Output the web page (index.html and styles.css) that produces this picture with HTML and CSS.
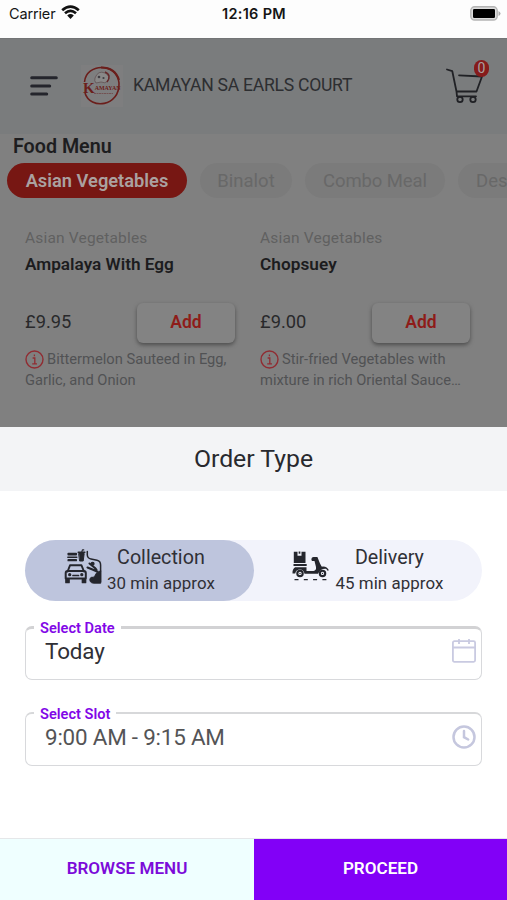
FILE: index.html
```
<!DOCTYPE html>
<html lang="en">
<head>
<meta charset="utf-8">
<title>Order Type</title>
<link rel="stylesheet" href="styles.css">
</head>
<body>
<div class="app">
  <div class="status">
    <div class="carrier"><span>Carrier</span>
      <svg width="19" height="15" viewBox="0 0 19 15"><path d="M1.2 5.3Q9.5-2 17.8 5.3M4 8.3Q9.5 3.5 15 8.3" fill="none" stroke="#111" stroke-width="2.7"/><path d="M6.2 10.4Q9.5 7.8 12.8 10.4L9.5 14Z" fill="#111"/></svg>
    </div>
    <div class="time">12:16 PM</div>
    <svg class="battery" width="31" height="15" viewBox="0 0 31 15"><rect x=".8" y=".8" width="26.4" height="13.2" rx="3.8" fill="#ddd" stroke="#b4b4b4" stroke-width="1.4"/><rect x="3" y="3" width="22" height="9" rx="1.2" fill="#000"/><path d="M28.5 5v5q2-1 2-2.5T28.5 5" fill="#aaa"/></svg>
  </div>

  <header class="header">
    <svg class="burger" width="28" height="20" viewBox="0 0 28 20" fill="none" stroke="#24252c" stroke-width="3" stroke-linecap="round"><path d="M1.7 1.8H26.3M1.7 9.9H19.7M1.7 18H16.7"/></svg>
    <svg class="logo" width="42" height="42" viewBox="0 0 42 42">
      <rect width="42" height="42" fill="#7e7e7f"/>
      <path d="M3.5 17C5-2 36-3 38 18C39 42 9 45 4 28" fill="none" stroke="#6b1e1b" stroke-width="1.6"/>
      <path d="M20 2.6Q34 2.5 38 15" fill="none" stroke="#6b1e1b" stroke-width="2"/>
      <path d="M14 13Q17 5 24 8Q30 11 27 16Q24 19 20 17L15 18Q13 16 14 13Z" fill="#898888" stroke="#625354" stroke-width=".8"/>
      <path d="M24 7Q31 10 26 17" fill="none" stroke="#66282a" stroke-width="1.5"/><circle cx="18" cy="12" r="1.3" fill="#413e43"/><circle cx="22.5" cy="13" r="1.1" fill="#413e43"/>
      <text x="2" y="28" class="logo-text"><tspan class="logo-k">K</tspan><tspan dy="-3" textLength="26" lengthAdjust="spacingAndGlyphs">AMAYAN</tspan></text>
      <path d="M13 28.5H32" stroke="#735253" stroke-dasharray="2 .5"/>
    </svg>
    <h1>KAMAYAN SA EARLS COURT</h1>
    <div class="cart">
      <svg width="37" height="36" viewBox="0 0 37 36" fill="none" stroke="#202125" stroke-width="1.8" stroke-linecap="round" stroke-linejoin="round"><path d="M1 1.5L6.3 3.2L10.5 23.5H30.5L36 8.5L13 7.3M10.5 23.5L11 28.3H30"/><circle cx="14" cy="31.5" r="2.7"/><circle cx="27" cy="31.5" r="2.7"/></svg>
      <span class="badge">0</span>
    </div>
  </header>

  <main class="menu">
    <h2>Food Menu</h2>
    <nav class="tabs"><span class="tab active">Asian Vegetables</span><span class="tab binalot">Binalot</span><span class="tab combo">Combo Meal</span><span class="tab dessert">Desserts</span></nav>
    <div class="products">
      <article>
        <div class="category">Asian Vegetables</div>
        <h3 class="name">Ampalaya With Egg</h3>
        <div class="buy"><span class="price">£9.95</span><button class="add">Add</button></div>
        <p><svg class="info" width="19" height="19" viewBox="0 0 19 19" fill="none" stroke="#902c32"><circle cx="9.5" cy="9.5" r="8.5" stroke-width="1.4"/><path d="M7.6 8H9.8V13.8M7.2 13.8H12M9.4 4.6V6.2" stroke-width="1.3"/></svg><span class="first">Bittermelon Sauteed in Egg,</span><br>Garlic, and Onion</p>
      </article>
      <article>
        <div class="category">Asian Vegetables</div>
        <h3 class="name chop">Chopsuey</h3>
        <div class="buy"><span class="price">£9.00</span><button class="add">Add</button></div>
        <p><svg class="info" width="19" height="19" viewBox="0 0 19 19" fill="none" stroke="#902c32"><circle cx="9.5" cy="9.5" r="8.5" stroke-width="1.4"/><path d="M7.6 8H9.8V13.8M7.2 13.8H12M9.4 4.6V6.2" stroke-width="1.3"/></svg><span class="first">Stir-fried Vegetables with</span><br>mixture in rich Oriental Sauce…</p>
      </article>
    </div>
  </main>

  <section class="sheet">
    <h2 class="sheet-title">Order Type</h2>
    <div class="sheet-body">
      <div class="types">
        <div class="type selected">
          <svg width="38" height="36" viewBox="0 0 38 36" fill="none" stroke="#25262d" stroke-width="1.7" stroke-linecap="round" stroke-linejoin="round">
            <path d="M4.3 5.6V4.6H12.2V5.6Z" fill="#25262d"/><path d="M3.8 8.2H12.8" stroke-width="1.4"/><path d="M4.3 10.8H12.2V11.5H4.3Z" fill="#25262d"/>
            <path d="M14.2 3.2H20.8" stroke-width="1.5"/><path d="M15 4.5H20.2L19.2 12H16Z" fill="#25262d" stroke-width="1"/><path d="M17.8 3L18.4.9H19.8" stroke-width="1.1"/>
            <path d="M3.6 22.5L6 16.3H17.5L20 22.5" stroke-width="1.9"/><path d="M1.7 24Q1.7 22 3.7 22H19.8Q21.8 22 21.8 24V29.5H1.7Z" stroke-width="2"/><path d="M2 30.5H5V33.5H2ZM18.5 30.5H21.5V33.5H18.5Z" fill="#25262d"/><circle cx="5.7" cy="25.7" r=".8" fill="#25262d"/><circle cx="17.8" cy="25.7" r=".8" fill="#25262d"/><path d="M9 26.5H14.5"/>
            <path d="M23.3 2.5V6Q23.5 9.3 27 10L33 11.2Q36.6 12 36.6 16V33" stroke-width="1.5"/><path d="M23.5 18.5L28.5 20.5L33 22.5M25.5 14.5L31 19L32.5 21" stroke-width="2.1"/><circle cx="28.6" cy="14.7" r="1.2" fill="#25262d"/><path d="M36.7 22V34.3H29.5Q25.5 33.8 25.8 30Q26.5 27.5 29.5 28.2Q31 27 32 24.5Q34 21.5 36.7 22Z" fill="#25262d" stroke-width=".8"/>
          </svg>
          <div class="type-text"><div class="type-name">Collection</div><div class="type-time">30 min approx</div></div>
        </div>
        <div class="type">
          <svg width="37" height="30" viewBox="0 0 37 30" fill="none" stroke="#25262d" stroke-width="1.8">
            <path d="M1.8.8H5.5V4.8H9.5V.8H13.5V12H1.8Z" fill="#25262d" stroke="none"/><path d="M7.5.5V2.7" stroke-width="1.7"/><path d="M1.5 14H14.7" stroke-width="2"/>
            <path d="M3 16.3H14.5V20H21.5Q24.5 19.5 24 16L22.5 10H20.2Q19.2 9.7 19.4 8Q19.6 6.2 21.5 6H25.4L28 12.5L30 16.2Q32 16 34.5 18Q29 17 26 22.7H12.5Q11.5 18.5 8 18.5Q4 18.5 3.2 22.5H.5Q.2 18.3 3 16.3Z" fill="#25262d" stroke="none"/><path d="M27 17Q34 14.5 36.2 19.5" stroke-width="1.5"/>
            <circle cx="8" cy="22.4" r="2.7" fill="#f2f3fb" stroke-width="2.1"/><circle cx="30.5" cy="22.4" r="2.7" fill="#f2f3fb" stroke-width="2.1"/><circle cx="8" cy="22.4" r=".7" fill="#25262d" stroke="none"/><circle cx="30.5" cy="22.4" r=".7" fill="#25262d" stroke="none"/><path d="M2.5 28.6H35" stroke-width="1.2" stroke-dasharray="4 5.3"/>
          </svg>
          <div class="type-text"><div class="type-name delivery">Delivery</div><div class="type-time">45 min approx</div></div>
        </div>
      </div>
      <fieldset class="field date"><legend>Select Date</legend><span class="value today">Today</span><svg width="24" height="24" viewBox="0 0 24 24" fill="none" stroke="#c9cae1" stroke-width="1.8"><rect x=".9" y="2.2" width="22.2" height="20.6" rx="1.5"/><path d="M1 8.5H23M7 0V5M17 0V5"/></svg></fieldset>
      <fieldset class="field slot"><legend>Select Slot</legend><span class="value">9:00 AM - 9:15 AM</span><svg width="24" height="24" viewBox="0 0 24 24" fill="none" stroke="#c5c7de" stroke-width="2.5" stroke-linecap="round"><circle cx="12" cy="12" r="10.5"/><path d="M12 6V12.2L16.2 14.5"/></svg></fieldset>
    </div>
    <div class="actions"><button class="browse">BROWSE MENU</button><button class="proceed">PROCEED</button></div>
  </section>
</div>
</body>
</html>
```

FILE: styles.css
```
* { box-sizing: border-box; }
body { margin: 0; background: #fff; color: #303036; font-family: Roboto, sans-serif; }
h1, h2, h3, p { margin: 0; font-weight: 400; }
button { border: 0; padding: 0; font-family: inherit; }
svg { flex: none; }
.app { width: 507px; height: 900px; overflow: hidden; display: flex; flex-direction: column; }
.status { height: 38px; flex: none; display: grid; grid-template-columns: 1fr auto 1fr; padding: 0 6px 0 9px; align-items: start; background: #fdfdfd; color: #151515; font-family: Inter, sans-serif; }
.carrier { display: flex; gap: 6px; font-size: 14.5px; line-height: 28px; letter-spacing: -.15px; }
.carrier svg { margin-top: 5px; }
.time { font-size: 14.5px; font-weight: 600; line-height: 28px; letter-spacing: .3px; margin-right: 2px; }
.battery { justify-self: end; margin-top: 6px; }

.header { height: 96px; flex: none; display: flex; align-items: center; padding: 0 20px 2px 30px; background: #7a7c7d; border-top: 1px solid #737576; }
.burger { margin-right: 23px; }
.logo { margin-right: 10px; }
.logo-k { font-size: 15px; }
.logo-text { font: bold 7px "Liberation Serif", serif; fill: #6b1e1b; }
.header h1 { font-size: 17.6px; line-height: 24px; color: #2d2e31; letter-spacing: -.28px; white-space: nowrap; margin-top: -1px; }
.cart { position: relative; width: 41px; height: 50px; margin-left: auto; padding-top: 7px; }
.badge { position: absolute; right: -2px; top: -1px; width: 15px; height: 17px; border-radius: 8px; background: #861b1b; color: #aaa0a0; text-align: center; font-size: 14px; line-height: 17px; }

.menu { height: 293px; flex: none; background: #808080; overflow: hidden; }
.menu h2 { padding-left: 13px; font-size: 19.7px; line-height: 25px; height: 29px; font-weight: 600; color: #1d1d1f; }
.tabs { display: flex; height: 35px; padding-left: 7px; gap: 13px; }
.tab { flex: none; border-radius: 18px; text-align: center; line-height: 36px; font-size: 18.5px; color: #686868; background: #7b7b7b; letter-spacing: 0; white-space: nowrap; }
.active { width: 180px; background: #771713; color: #aaa1a0; font-weight: 600; font-size: 18.3px; }
.binalot { width: 92px; }
.combo { width: 140px; letter-spacing: -.1px; }
.dessert { width: 114px; text-align: left; padding-left: 18px; }
.products { display: grid; grid-template-columns: 235px 235px; padding: 29px 0 0 25px; }
.category { font-size: 15.5px; line-height: 22px; letter-spacing: .18px; color: #606060; }
.name { margin-top: 3px; font-size: 17.2px; line-height: 24px; font-weight: 600; color: #1c1c1e; }
.chop { letter-spacing: .05px; }
.buy { display: flex; align-items: center; justify-content: space-between; width: 210px; margin-top: 27px; height: 40px; }
.price { font-size: 18.3px; color: #29292b; line-height: 24px; margin-top: -2px; }
.add { width: 98px; height: 40px; border-radius: 6px; padding-bottom: 3px; background: #838383; box-shadow: 0 2px 4px #4c4c4c; color: #8e1c19; font-size: 17.5px; font-weight: 600; }
.products p { margin-top: 6px; color: #515254; font-size: 14.7px; line-height: 21px; white-space: nowrap; }
.info { vertical-align: -5px; }
.first { margin-left: 3px; }

.sheet { flex: 1; display: flex; flex-direction: column; background: #fff; }
.sheet-title { height: 64px; flex: none; background: #f3f4f6; text-align: center; font-size: 24.8px; line-height: 64px; color: #28292e; }
.sheet-body { padding: 49px 25px 0; flex: 1; }
.types { height: 61px; display: grid; grid-template-columns: 1fr 1fr; background: #f2f3fb; border-radius: 31px; }
.type { display: flex; padding: 8px 0 0 38px; }
.type svg { margin-top: 3px; }
.selected { background: #bec5dd; border-radius: 31px; padding-left: 39px; }
.selected svg { margin-top: 1px; }
.type-text { text-align: center; margin-left: 5px; }
.type:not(.selected) .type-text { margin-left: 7px; }
.type-name { font-size: 19.7px; line-height: 20px; }
.type-time { font-size: 16.9px; line-height: 20px; margin-top: 5px; letter-spacing: .05px; }
.field { height: 61px; margin: 0; padding: 0 5px 13px 19px; border: 1px solid #d8d9dc; border-radius: 7px; display: flex; align-items: center; justify-content: space-between; min-width: 0; }
.date { margin-top: 18px; border-top: 3px solid #d2d2d4; }
.slot { margin-top: 25px; border-top: 2px solid #d7d8da; }
.field legend { margin-left: -11px; padding: 0 6px; height: 16px; line-height: 18px; font-size: 14.6px; font-weight: 600; color: #8207e7; }
.value { font-size: 22.4px; line-height: 28px; }
.today { letter-spacing: -.1px; }
.slot .value { color: #545456; letter-spacing: -.2px; }
.actions { height: 62px; flex: none; display: grid; grid-template-columns: 254px 253px; border-top: 1px solid #e5e7e9; }
.actions button { font-size: 17.1px; font-weight: 600; padding-bottom: 3px; }
.browse { background: #efffff; color: #7c0bd9; }
.proceed { background: #8200f7; color: #fff; }
```
